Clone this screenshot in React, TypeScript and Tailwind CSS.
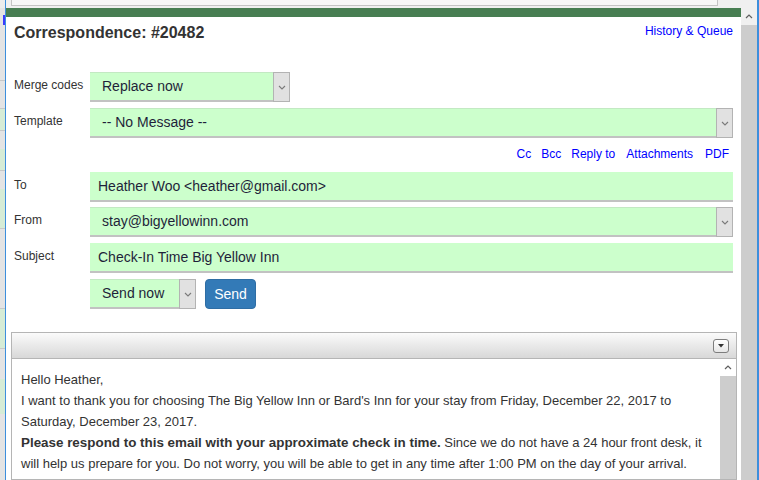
import React from "react";

const ChevronDown = () => (
  <svg width="8" height="5" viewBox="0 0 8 5" fill="none">
    <path d="M1 1l3 3 3-3" stroke="#7a7a7a" strokeWidth="1.1" />
  </svg>
);

const ChevronUp = () => (
  <svg width="8" height="5" viewBox="0 0 8 5" fill="none">
    <path d="M1 4l3-3 3 3" stroke="#5f5f5f" strokeWidth="1.2" />
  </svg>
);

interface SelectProps {
  value: string;
  width?: string;
}

const SelectBox = ({ value, width }: SelectProps) => (
  <div className={`${width ?? "flex-1 min-w-0"} h-[30px] flex bg-[#ccffcc] border-t border-t-[#c3e9c3] border-b-2 border-b-[#c2c2c2]`}>
    <div className="flex-1 flex items-center pl-[12px] text-[14px] text-[#1f1f3a] truncate">{value}</div>
    <div className="w-[17px] shrink-0 bg-[#e1e1e1] border border-[#b3b3b3] -mt-px -mb-0.5 flex items-center justify-center">
      <ChevronDown />
    </div>
  </div>
);

const TextBox = ({ value }: { value: string }) => (
  <div className="flex-1 min-w-0 h-[30px] flex items-center bg-[#ccffcc] border-t border-t-[#ccffcc] border-b-2 border-b-[#c2c2c2] pl-[8px] text-[14px] text-[#1f1f3a]">
    {value}
  </div>
);

const Row = ({ label, children, className }: { label: string; children: React.ReactNode; className?: string }) => (
  <div className={`flex items-start ${className ?? ""}`}>
    <div className="w-[76px] shrink-0 pt-[5px] text-[12px] leading-[16px] text-[#333]">{label}</div>
    {children}
  </div>
);

const links = [
  { label: "Cc", cls: "" },
  { label: "Bcc", cls: "" },
  { label: "Reply to", cls: "" },
  { label: "Attachments", cls: "ml-[1px]" },
  { label: "PDF", cls: "ml-[2px]" },
];

export default function App() {
  return (
    <div className="w-[759px] h-[480px] overflow-hidden flex bg-white font-['Liberation_Sans',Arial,sans-serif]">
      {/* page behind the dialog */}
      <div className="w-[5px] shrink-0 flex flex-col bg-[#e4e4e4]">
        <div className="h-[8px] bg-[#ececec]" />
        <div className="h-[7px]" />
        <div className="h-[10px] ml-[3px] bg-[#3b3bff]" />
        <div className="h-[56px] border-b border-[#c8c8c8]" />
        <div className="h-[28px] border-b border-[#c8c8c8]" />
        <div className="h-[22px] bg-[#d6ecd6] border-b border-[#c8c8c8]" />
        <div className="h-[18px]" />
        <div className="h-[22px] bg-[#d6ecd6] border-b border-[#c8c8c8]" />
        <div className="h-[18px]" />
        <div className="h-[40px] bg-[#d6ecd6] border-b border-[#c8c8c8]" />
        <div className="h-[80px] border-b border-[#c8c8c8]" />
        <div className="h-[40px] bg-[#d6ecd6] border-b border-[#c8c8c8]" />
        <div className="h-[30px]" />
        <div className="h-[35px] bg-[#d6ecd6]" />
        <div className="flex-1" />
      </div>

      {/* dialog */}
      <div className="flex-1 min-w-0 flex flex-col border-l border-r-2 border-[#3d8fdc]">
        <div className="h-[8px] shrink-0 bg-[#f0f0f0] flex">
          <div className="ml-[5px] w-[707px] h-[6px] bg-[#f7f7f7] border border-t-0 border-[#c4c4c4]" />
        </div>
        <div className="flex-1 flex min-h-0">
          <div className="flex-1 flex flex-col min-w-0">
            <div className="h-[9px] shrink-0 bg-[#477e52]" />

            <div className="px-[8px]">
              <div className="flex items-start justify-between pt-[7px]">
                <h1 className="text-[16px] leading-[18px] font-bold text-[#333]">Correspondence: #20482</h1>
                <a className="text-[12px] leading-[14px] text-[#0000ff]">History &amp; Queue</a>
              </div>

              <Row label="Merge codes" className="mt-[30px] mb-[6px]">
                <SelectBox value="Replace now" width="w-[200px]" />
              </Row>
              <Row label="Template">
                <SelectBox value="-- No Message --" />
              </Row>

              <div className="h-[34px] flex justify-end items-start pt-[9px] pr-[4px] gap-[10px] text-[12px] leading-[14px] text-[#0000ff]">
                {links.map((l) => (
                  <a key={l.label} className={l.cls}>{l.label}</a>
                ))}
              </div>

              <Row label="To" className="mb-[5px]">
                <TextBox value="Heather Woo <heather@gmail.com>" />
              </Row>
              <Row label="From" className="mb-[6px]">
                <SelectBox value="stay@bigyellowinn.com" />
              </Row>
              <Row label="Subject" className="mb-[6px]">
                <TextBox value="Check-In Time Big Yellow Inn" />
              </Row>

              <div className="flex items-start pl-[76px] gap-[9px]">
                <SelectBox value="Send now" width="w-[106px]" />
                <button className="h-[30px] w-[51px] rounded-[4px] bg-[#337ab7] border border-[#2e6da4] text-white text-[14px]">
                  Send
                </button>
              </div>
            </div>

            {/* message editor */}
            <div className="mt-[23px] ml-[5px] mr-[4px] flex-1 flex flex-col border border-[#b5b5b5] min-h-0">
              <div className="h-[26px] shrink-0 flex items-center justify-end pr-[7px] bg-gradient-to-b from-[#fbfbfb] to-[#d8d8d8] border-b border-[#b5b5b5]">
                <div className="w-[16px] h-[14px] rounded-[3px] border border-[#7d7d7d] bg-gradient-to-b from-white to-[#e6e6e6] flex items-center justify-center">
                  <svg width="6" height="4" viewBox="0 0 6 4">
                    <path d="M0 0h6L3 3.5z" fill="#333" />
                  </svg>
                </div>
              </div>
              <div className="flex-1 flex min-h-0">
                <div className="flex-1 min-w-0 pl-[9px] pt-[10px] text-[13px] leading-[21px] text-[#333] whitespace-nowrap overflow-hidden">
                  <div>Hello Heather,</div>
                  <div>I want to thank you for choosing The Big Yellow Inn or Bard's Inn for your stay from Friday, December 22, 2017 to</div>
                  <div>Saturday, December 23, 2017.</div>
                  <div>
                    <b className="text-[13.4px]">Please respond to this email with your approximate check in time.</b> Since we do not have a 24 hour front desk, it
                  </div>
                  <div>will help us prepare for you. Do not worry, you will be able to get in any time after 1:00 PM on the day of your arrival.</div>
                  <div>Sometimes if you want to check in after 5:00 PM we might leave you with instructions.</div>
                </div>
                <div className="w-[16px] shrink-0 flex flex-col">
                  <div className="h-[17px] bg-white flex items-center justify-center">
                    <ChevronUp />
                  </div>
                  <div className="flex-1 bg-[#cdcdcd]" />
                </div>
              </div>
            </div>
          </div>

          {/* window scrollbar */}
          <div className="w-[16px] shrink-0 flex flex-col">
            <div className="h-[17px] bg-[#f0f0f0] flex items-center justify-center">
              <ChevronUp />
            </div>
            <div className="flex-1 bg-[#cdcdcd]" />
          </div>
        </div>
      </div>
    </div>
  );
}
